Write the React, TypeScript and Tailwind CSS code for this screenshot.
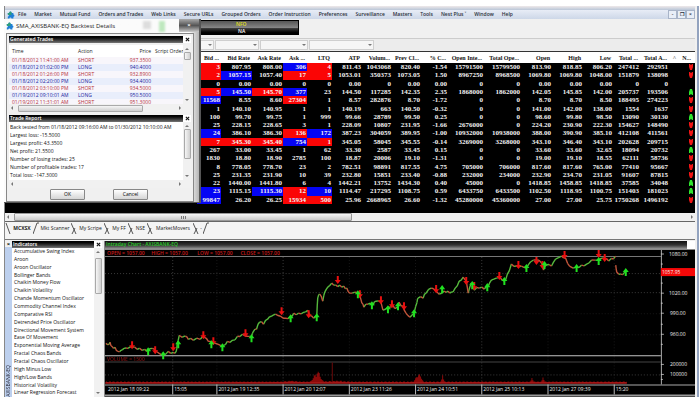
import React from "react";

const menus = [
  "File", "Market", "Mutual Fund", "Orders and Trades", "Web Links", "Secure URLs", "Grouped Orders",
  "Order Instruction", "Preferences", "Surveillance", "Masters", "Tools", "Nest Plus ˅", "Window", "Help",
];

const columns: [string, string][] = [
  ["Bid ...", "w-[24px]"], ["Bid Rate", "w-[31px]"], ["Ask Rate", "w-[31px]"], ["Ask ...", "w-[24px]"],
  ["LTQ", "w-[25px]"], ["ATP", "w-[30px]"], ["Volum...", "w-[30px]"], ["Prev Cl...", "w-[29px]"],
  ["% C...", "w-[27px]"], ["Open Inte...", "w-[36px]"], ["Total Ope...", "w-[37px]"], ["Open", "w-[31px]"],
  ["High", "w-[31px]"], ["Low", "w-[30px]"], ["Total ...", "w-[27px]"], ["Total A...", "w-[29px]"], ["N...", ""],
];

// values | colour of the first five cells (r, b or -) | direction
const quotes: [string, string, "up" | "down" | ""][] = [
  ["3 807.95 808.00 306 4 811.43 1043068 820.40 -1.54 15791500 15799500 813.90 818.85 806.20 247412 292951", "r--br", "down"],
  ["2 1057.15 1057.40 17 5 1053.01 350373 1073.05 1.50 8967250 8968500 1069.80 1069.80 1048.00 151879 138098", "rb-rr", "down"],
  ["0 0.00 0.00 0 0 0.00 0 0.00 0.00 0 0 0.00 0.00 0.00 0 0", "-----", ""],
  ["5 145.50 145.70 377 23 144.50 117285 142.35 2.35 1868000 1862000 142.05 145.85 142.00 205737 193506", "rbrb-", "up"],
  ["11568 8.55 8.60 27304 1 8.57 282876 8.70 -1.72 0 0 8.70 8.70 8.50 188495 274223", "b--r-", "down"],
  ["1 140.10 140.95 1 1 140.19 663 140.50 -0.32 0 0 141.00 142.00 138.00 1554 1637", "-----", "down"],
  ["100 99.70 99.75 1 999 99.66 28789 99.50 0.25 0 0 98.60 99.80 98.50 13090 30130", "-----", "up"],
  ["25 228.15 228.65 3 1 228.09 10807 231.95 -1.66 2676000 0 224.20 230.90 222.30 154627 148490", "-----", "down"],
  ["24 386.10 386.30 136 172 387.23 304059 389.95 -1.00 10932000 10938000 388.00 390.90 385.10 412108 411561", "b--rb", "down"],
  ["7 345.30 345.40 754 1 345.05 58045 345.55 -0.14 3269000 3268000 343.10 346.40 343.10 202628 209715", "rrrbr", "down"],
  ["267 33.00 33.45 1 62 33.30 2587 33.45 0.15 0 0 33.60 33.60 32.65 18094 20732", "-----", "up"],
  ["1830 18.80 18.90 2785 100 18.87 20006 19.10 -1.31 0 0 19.00 19.10 18.55 62111 58736", "-----", "down"],
  ["8 778.05 778.70 23 2 782.51 98891 817.55 4.75 705000 706000 817.60 817.60 765.00 77410 95667", "-----", "down"],
  ["25 231.35 231.90 10 39 232.80 15851 233.40 -0.88 232000 234000 232.90 234.70 231.05 91607 87815", "-----", "down"],
  ["22 1440.00 1441.80 6 4 1442.21 13752 1434.30 0.40 45000 0 1418.85 1458.85 1418.85 37585 34048", "-----", "up"],
  ["23 1115.15 1115.30 12 10 1114.47 217295 1108.75 0.59 6433750 6433500 1102.50 1118.95 1100.75 151403 181023", "b-brb", "up"],
  ["99847 26.20 26.25 15934 500 25.96 2668965 26.60 -1.32 45280000 45360000 27.00 27.00 25.75 1750268 1496192", "b--rr", "down"],
];
const cellColor: Record<string, string> = { r: "bg-[#fb0505]", b: "bg-[#0505f5]", "-": "" };

const trades = [
  ["01/18/2012 11:41:00 AM", "SHORT", "937.3500"],
  ["01/18/2012 01:02:00 PM", "LONG", "940.4000"],
  ["01/18/2012 01:26:00 PM", "SHORT", "932.8900"],
  ["01/18/2012 02:20:00 PM", "LONG", "934.4000"],
  ["01/18/2012 03:10:00 PM", "SHORT", "934.5000"],
  ["01/19/2012 09:10:01 AM", "LONG", "950.5000"],
  ["01/19/2012 11:31:01 AM", "SHORT", "951.3000"],
];

const report = [
  "Back tested from 01/18/2012 09:16:00 AM to 01/30/2012 10:10:00 AM",
  "Largest loss: -15.5000", "Largest profit: 43.3500", "Net profit: 21.5500",
  "Number of losing trades: 25", "Number of profitable trades: 17", "Total loss: -147.3000",
];

const indicators = [
  "Accumulative Swing Index", "Aroon", "Aroon Oscillator", "Bollinger Bands", "Chaikin Money Flow",
  "Chaikin Volatility", "Chande Momentum Oscillator", "Commodity Channel Index", "Comparative RSI",
  "Detrended Price Oscillator", "Directional Movement System", "Ease Of Movement",
  "Exponential Moving Average", "Fractal Chaos Bands", "Fractal Chaos Oscillator", "High Minus Low",
  "High/Low Bands", "Historical Volatility", "Linear Regression Forecast",
];

const price: [number, number][] = [
  [106, 343], [108, 344], [110, 342], [112, 346], [115, 347], [118, 351], [121, 350], [124, 348], [128, 348], [132, 347],
  [137, 349], [142, 350], [147, 351], [152, 348], [155, 350], [159, 353], [163, 354], [168, 351], [173, 352], [176, 351],
  [177, 343], [179, 335], [182, 337], [185, 336], [188, 339], [193, 340], [200, 339], [204, 337], [208, 341], [213, 342],
  [218, 344], [223, 345], [227, 341], [232, 340], [237, 336], [242, 334], [247, 336], [251, 336], [253, 331], [256, 329],
  [259, 322], [263, 324], [267, 319], [271, 316], [275, 314], [280, 316], [285, 318], [290, 316], [293, 313], [298, 313],
  [303, 312], [307, 310], [309, 315], [313, 318], [316, 317], [317, 298], [319, 294], [322, 301], [324, 292], [327, 287],
  [331, 283], [335, 285], [339, 285], [343, 286], [346, 288], [349, 293], [354, 292], [358, 293], [361, 303], [363, 307],
  [367, 304], [372, 305], [375, 301], [380, 302], [382, 310], [387, 307], [392, 305], [395, 308], [398, 302], [402, 306],
  [405, 313], [409, 317], [413, 313], [416, 302], [417, 298], [422, 298], [425, 293], [430, 288], [434, 290], [438, 294],
  [443, 291], [447, 291], [450, 292], [454, 288], [458, 281], [462, 277], [465, 281], [467, 293], [470, 283], [473, 290],
  [478, 288], [483, 289], [487, 286], [490, 280], [495, 278], [498, 276], [503, 281], [506, 274], [510, 264], [515, 266],
  [520, 266], [525, 268], [529, 262], [535, 260], [540, 263], [542, 270], [545, 265], [550, 266], [554, 259], [560, 256],
  [564, 258], [568, 266], [575, 267], [580, 265], [585, 264], [590, 260], [597, 260], [602, 258], [607, 261], [612, 259],
  [614, 257],
];
const lastBars: [number, number][] = [[614, 265], [615, 272], [619, 274], [623, 272]];

const sells = [
  [132, 345], [155, 350], [173, 347], [203, 335], [213, 341], [245, 333], [281, 311], [308, 314], [337, 280], [359, 294],
  [380, 300], [391, 304], [403, 306], [435, 289], [465, 281], [473, 286], [498, 276], [517, 265], [535, 261], [541, 265],
  [563, 255], [597, 254], [603, 258],
];
const buys = [
  [148, 351], [163, 355], [178, 344], [211, 344], [222, 347], [251, 338], [290, 318], [316, 317], [357, 294], [371, 305],
  [387, 309], [397, 306], [413, 313], [441, 289], [471, 285], [486, 287], [503, 281], [525, 268], [543, 265], [575, 268],
  [597, 261], [624, 272],
];

const wobble = (n: number) => Math.sin(n * 12.9898) * 1.6;

function bars(points: [number, number][]) {
  const up: string[] = [];
  const down: string[] = [];
  for (let i = 1; i < points.length; i++) {
    const [x0, y0] = points[i - 1];
    const [x1, y1] = points[i];
    const xm = (x0 + x1) / 2;
    const ym = (y0 + y1) / 2 + wobble(i);
    (ym <= y0 ? up : down).push(`M${x0} ${y0}L${xm} ${ym}`);
    (y1 <= ym ? up : down).push(`M${xm} ${ym}L${x1} ${y1}`);
  }
  return { up: up.join(""), down: down.join("") };
}

function volume() {
  let d = "";
  const peaks = [[316, 11, 4], [417, 9, 3], [441, 7, 1], [530, 5, 1], [541, 6, 1], [290, 1, 6], [335, 1, 8]];
  for (let x = 106; x < 625; x++) {
    let h = 1 + Math.abs(Math.sin(x * 7.13));
    for (const [c, p, w] of peaks) h += p * Math.exp(-(((x - c) / w) ** 2)) * (0.5 + 0.5 * Math.abs(Math.sin(x * 3.7)));
    d += `M${x + 0.5} 383V${(383 - h).toFixed(1)}`;
  }
  return d;
}

const dates: [number, string][] = [
  [106, "2012 Jan 18 09:22"], [172, "15:05"], [216, "2012 Jan 19 12:35"], [282, "2012 Jan 20 12:07"],
  [348, "2012 Jan 23 11:26"], [414, "2012 Jan 24 10:51"], [480, "2012 Jan 25 10:13"], [546, "2012 Jan 27 09:39"], [612, "15:20"],
];
const levels: [number, string][] = [[254, "1080.00"], [293, "1020.00"], [313, "990.00"], [334, "960.00"], [364, "200000"], [374, "100000"]];

function PuzzleIcon({ className }: { className: string }) {
  return (
    <svg viewBox="0 0 10 10" className={className} aria-hidden="true">
      <path d="M3 2.500a1.400 1.400 0 1 1 2.600 0H8v2a1.300 1.300 0 1 1 0 2.600V9.500H5.600a1.300 1.300 0 1 0-2.600 0H1V7a1.300 1.300 0 1 0 0-2.600V2.500z" fill="#1f7fd6" />
      <path d="M3 2.500a1.400 1.400 0 1 1 2.600 0V5H1.600a1.200 1.200 0 0 0-.6-.6V2.500z" fill="#2f9e7a" />
    </svg>
  );
}

function CloseBox({ label }: { label: string }) {
  return (
    <button aria-label={label} className="flex h-[7px] w-[8px] shrink-0 items-center justify-center bg-white">
      <svg viewBox="0 0 6 6" className="size-[5px]"><path d="M1 1l4 4M5 1L1 5" stroke="#111" strokeWidth="1.3" /></svg>
    </button>
  );
}

function Arrow({ dir }: { dir: "up" | "down" | "left" | "right" }) {
  const d = { up: "M1 4l2-2 2 2z", down: "M1 2l2 2 2-2z", left: "M4 1L2 3l2 2z", right: "M2 1l2 2-2 2z" }[dir];
  return <svg viewBox="0 0 6 6" className="size-[6px] shrink-0" aria-hidden="true"><path d={d} fill="#777" /></svg>;
}

function VScroll({ thumb }: { thumb: string }) {
  return (
    <div className="flex w-[8px] shrink-0 flex-col items-center bg-[#f1f1f1] py-px">
      <Arrow dir="up" />
      <div className={`w-[7px] rounded-[1px] border border-[#a9a9a9] bg-linear-to-r from-[#f6f6f6] to-[#cfcfcf] ${thumb}`} />
      <div className="flex-1" />
      <Arrow dir="down" />
    </div>
  );
}

function PanelTitle({ text }: { text: string }) {
  return (
    <div className="flex h-[7px]">
      <div className="flex-1 bg-linear-to-b from-black to-[#777] pl-px text-[5px] leading-[7px] font-semibold text-white">{text}</div>
      <CloseBox label={`Close ${text}`} />
    </div>
  );
}

function Dialog() {
  return (
    <section aria-label="Backtest details" className="absolute top-[19px] left-[4px] flex h-[184px] w-[197px] flex-col border-r-2 border-b border-[#555] bg-linear-to-r from-[#fbfbfb] from-95% to-[#b5b5b5] pr-[5px] pl-[2px]">
      <header className="flex h-[14px] items-center gap-[2px]">
        <PuzzleIcon className="size-[8px]" />
        <h1 className="text-[6px] leading-[8px] text-[#222]">SMA_AXISBANK-EQ Backtest Details</h1>
        <div className="ml-auto flex gap-[8px] pr-[12px] blur-[1px]">
          <span className="h-[8px] w-[8px] bg-[#ddd]" />
          <span className="h-[11px] w-[6px] bg-[#bfe8bf]" />
        </div>
        <button aria-label="Close" className="-mr-[5px] h-[13px] w-[20px] self-start bg-linear-to-b from-[#aaa] via-[#555] to-[#ccc] text-[6px] leading-[9px] font-bold text-white">×</button>
      </header>
      <div className="flex flex-1 flex-col border border-[#888] bg-[#f0f0f0] px-[2px] pt-[2px]">
        <PanelTitle text="Generated Trades" />
        <div className="mt-[2px] flex h-[59px] overflow-hidden bg-white">
          <table className="w-full table-fixed self-start text-[5px] leading-[7px]">
            <thead>
              <tr className="h-[12px] text-left text-[#222]">
                <th className="w-[69px] pl-[3px] font-medium">Time</th>
                <th className="w-[38px] font-medium">Action</th>
                <th className="w-[35px] text-right font-medium">Price</th>
                <th className="pl-[4px] font-medium whitespace-nowrap">Script Order</th>
              </tr>
            </thead>
            <tbody>
              {trades.map(([time, action, p], i) => (
                <tr key={time} className={i % 2 ? "bg-[#e9eefb] text-[#1c1c9c]" : "bg-[#f8f6fb] text-[#b5303c]"}>
                  <td className="pl-[3px] whitespace-nowrap">{time}</td>
                  <td>{action}</td>
                  <td className="text-right">{p}</td>
                  <td />
                </tr>
              ))}
            </tbody>
          </table>
          <VScroll thumb="h-[8px]" />
        </div>
        <div className="flex h-[8px] items-center bg-[#f1f1f1] pr-[8px]">
          <Arrow dir="left" />
          <div className="ml-[3px] h-[7px] w-[125px] rounded-[1px] border border-[#aaa] bg-linear-to-b from-[#f6f6f6] to-[#cfcfcf]" />
          <div className="flex-1" />
          <Arrow dir="right" />
        </div>
        <div className="mt-[3px]"><PanelTitle text="Trade Report" /></div>
        <div className="flex h-[58px] bg-white">
          <div className="min-w-0 flex-1 overflow-hidden pt-px pl-px text-[5px] leading-[8px] whitespace-nowrap text-[#111]">
            {report.map((line) => <p key={line}>{line}</p>)}
          </div>
          <VScroll thumb="h-[30px]" />
        </div>
        <div className="flex h-[8px] items-center justify-between bg-[#f1f1f1] pr-[8px]"><Arrow dir="left" /><Arrow dir="right" /></div>
        <div className="flex gap-[28px] pt-px pl-[41px]">
          {["OK", "Cancel"].map((b) => (
            <button key={b} className="h-[11px] w-[35px] rounded-[1px] border border-[#888] bg-linear-to-b from-white to-[#d5d5d5] text-[5px] leading-[9px] font-medium">{b}</button>
          ))}
        </div>
      </div>
    </section>
  );
}

function MarketTable() {
  return (
    <div className="border-t border-[#333] bg-black pb-[9px] pl-[192px]">
      <table className="h-[152px] w-full table-fixed border-collapse text-right font-['Liberation_Serif',serif] text-[7px] leading-[8px] font-bold text-[#f2f2f2]">
        <thead>
          <tr className="h-[11px] bg-white text-[6px] text-[#111]">
            {columns.map(([name, w]) => (
              <th key={name} className={`${w} p-0 pr-[2px] whitespace-nowrap last:pr-[4px]`}>
                {name === "N..." && <span className="mr-[6px] text-[#666]">^</span>}
                {name}
              </th>
            ))}
          </tr>
        </thead>
        <tbody>
          {quotes.map(([line, colors, dir]) => (
            <tr key={line}>
              {line.split(" ").map((v, i) => (
                <td key={i} className={`p-0 pr-px ${cellColor[colors[i] ?? "-"]}`}>{v}</td>
              ))}
              <td className="p-0 pr-[2px]">
                {dir && (
                  <svg viewBox="0 0 4 6" className="ml-auto h-[6px] w-[4px]" role="img" aria-label={dir}>
                    {dir === "up"
                      ? <path d="M1 0H3L4 3V6H2.600V5H1.400V6H0V3z" fill="#2ee52e" />
                      : <path d="M1 6H3L4 3V0H2.600V1H1.400V0H0V3z" fill="#f01515" />}
                  </svg>
                )}
              </td>
            </tr>
          ))}
        </tbody>
      </table>
    </div>
  );
}

function Slash({ dir }: { dir: "fwd" | "back" | "both" }) {
  const d = { back: "M1 1L5 12", fwd: "M0 12L4 1H6", both: "M0 1L5 12M1 12L4 6" }[dir];
  return <svg viewBox="0 0 6 13" className="h-[13px] w-[6px] shrink-0" aria-hidden="true"><path d={d} stroke="#444" strokeWidth="0.9" fill="none" /></svg>;
}

function Tabs() {
  const tabs: [string, string, "fwd" | "back" | "both"][] = [
    ["MCXSX", "w-[22px] font-bold", "fwd"], ["Mkt Scanner", "w-[32px]", "both"], ["My Scripe", "w-[27px]", "both"],
    ["My FF", "w-[18px]", "both"], ["NSE", "w-[13px]", "both"], ["MarketMovers", "w-[40px]", "both"], ["-", "w-[4px]", "fwd"],
  ];
  return (
    <nav aria-label="Watch lists" className="flex h-[18px] items-start border-t border-[#666] bg-[#f4f4f4] text-[5px] leading-[13px]">
      <Slash dir="back" />
      {tabs.map(([name, w, slash]) => (
        <React.Fragment key={name}>
          <button className={`h-[13px] text-center whitespace-nowrap text-[#222] ${w}`}>{name}</button>
          <Slash dir={slash} />
        </React.Fragment>
      ))}
    </nav>
  );
}

function Chart() {
  const main = bars(price);
  const last = bars(lastBars);
  return (
    <svg viewBox="105 249 588 147" className="block w-full bg-black" role="img" aria-label="AXISBANK-EQ intraday chart">
      <g stroke="#555" strokeWidth="0.7" strokeDasharray="1 2">
        <path d="M105 273.500H659M105 292.500H659M105 374.500H659M172.500 257V384M282.500 257V384M480.500 257V384" />
        <path d="M105 313.500H659M105 334.500H659M216.500 257V384M348.500 257V384M414.500 257V384M546.500 257V384M612.500 257V384" opacity="0.4" />
      </g>
      <g fill="#c81a1a" fontSize="5" fontWeight="600">
        <text x="107" y="255">OPEN = 1057.00</text>
        <text x="151" y="255">HIGH = 1057.00</text>
        <text x="197" y="255">LOW = 1057.00</text>
        <text x="240" y="255">CLOSE = 1057.00</text>
        <text x="107" y="361" opacity="0.6">VOLUME = 1500</text>
      </g>
      <path d="M105 249.500H693" stroke="#888" />
      <path d="M105 256.500H659" stroke="#777" />
      <path d="M105 355.500H659" stroke="#c4c4c4" />
      <path d="M105 361.500H659" stroke="#444" />
      <path d={volume()} stroke="#8b0a0a" strokeWidth="1" />
      <path d="M331.500 383V362" stroke="#6b0a0a" strokeWidth="1" />
      <path d="M105 382.500H625" stroke="#c02020" strokeWidth="1" />
      <path d="M105 384.500H693" stroke="#aaa" />
      <path d="M659.500 250V384" stroke="#aaa" />
      <path d="M659 254h3M659 264h2M659 283h2M659 293h3M659 303h2M659 313h3M659 324h2M659 334h3M659 344h2M659 364h3M659 374h3M659 379h2" stroke="#ccc" strokeWidth="0.8" />
      <g fill="none" strokeWidth="1.4">
        <path d={main.up + last.up} stroke="#55b83c" />
        <path d={main.down + last.down} stroke="#c0543a" />
      </g>
      {sells.map(([x, y]) => (
        <path key={`s${x}`} d={`M${x - 1} ${y - 4}h2v4h2l-3 4l-3 -4h2z`} fill="#e81010" />
      ))}
      {buys.map(([x, y]) => (
        <path key={`b${x}`} d={`M${x - 1} ${y + 4}h2v-4h2l-3 -4l-3 4h2z`} fill="#20e020" />
      ))}
      <rect x="659" y="268" width="34" height="8" fill="#f50808" />
      <g fill="#eee" fontSize="5" fontWeight="500">
        <text x="660" y="274">1057.95</text>
        {levels.map(([y, t]) => <text key={t} x={t.length === 7 ? 667 : 668} y={y + 2}>{t}</text>)}
        {dates.map(([x, t]) => <text key={x} x={x + 2} y="391">{t}</text>)}
      </g>
      <path d="M172.500 384V394M216.500 384V394M282.500 384V394M348.500 384V394M414.500 384V394M480.500 384V394M546.500 384V394M612.500 384V394" stroke="#bbb" />
      <path d="M105 395H693" stroke="#999" strokeWidth="2" />
    </svg>
  );
}

export default function App() {
  return (
    <main className="bg-white pt-[6px] pl-[4px] font-['Open_Sans','Noto_Sans',sans-serif]">
      <div className="mr-px border-r-2 border-l border-[#93a3bf] border-l-[#888] bg-[#f0f0f0] pr-[2px]">
        <div className="h-[4px] bg-linear-to-b from-[#efe9ea] to-[#b9c6d8]" />
        <nav aria-label="Main menu" className="flex h-[9px] items-center bg-linear-to-b from-[#e8edf6] to-[#cdd7e8] pl-[2px] text-[5px] leading-[9px] font-semibold whitespace-nowrap text-[#2a2f3a]">
          <PuzzleIcon className="mr-[3px] size-[8px]" />
          <div className="flex gap-[8px]">
            {menus.map((m) => <button key={m}>{m}</button>)}
          </div>
          <div className="ml-auto flex">
            {["-", "❐", "×"].map((g) => (
              <button key={g} aria-label={g === "-" ? "Minimise" : g === "×" ? "Close window" : "Restore"} className="h-[9px] w-[9px] border border-[#a8b4c8] bg-[#e8eef7] text-center text-[5px] leading-[7px]">{g}</button>
            ))}
          </div>
        </nav>
        <div className="flex h-[19px] pt-px pl-[190px]">
          <div className="h-[15px] w-[104px] border border-black bg-black text-[5px] leading-[7px] font-semibold">
            <div className="h-[7px] bg-linear-to-b from-[#555] to-[#888] pl-[40px] text-[#e5e020]">NFO</div>
            <div className="h-[6px] bg-linear-to-b from-[#444] to-black pl-[42px] text-white">NA</div>
          </div>
        </div>
        <div className="flex h-[13px] gap-px border-t border-[#ccc] bg-[#ececec] pt-px pl-[168px]">
          {["w-[41px]", "w-[44px]", "w-[48px]", "w-[65px]"].map((w, i) => (
            <div key={w} className={`flex h-[10px] items-center justify-end border border-[#cfcfcf] bg-[#f6f6f6] ${w}`}>
              <select aria-label={`Contract filter ${i + 1}`} className="h-[8px] min-w-0 flex-1 appearance-none bg-transparent text-[5px] leading-[8px]" />
              <Arrow dir="down" />
            </div>
          ))}
        </div>
        <MarketTable />
        <div className="flex h-[8px] items-center bg-[#f0f0f0]">
          <Arrow dir="left" />
          <div className="ml-[3px] flex h-[8px] w-[49%] items-center justify-center gap-px rounded-[1px] border border-[#999] bg-linear-to-b from-[#f6f6f6] to-[#c9c9c9]">
            <span className="h-[3px] w-px bg-[#777]" />
            <span className="h-[3px] w-px bg-[#777]" />
            <span className="h-[3px] w-px bg-[#777]" />
          </div>
          <div className="flex-1" />
          <Arrow dir="right" />
        </div>
        <Tabs />
        <div className="flex border-t border-[#777] pt-px">
          <aside className="flex w-[7px] shrink-0 flex-col items-center justify-between bg-[#bdd0ee]">
            <button aria-label="Close dock" className="w-full bg-[#f0f0f0] text-[6px] leading-[6px] font-bold">×</button>
            <span className="rotate-180 text-[5px] leading-[7px] font-medium text-[#223] [writing-mode:vertical-rl]">AXISBANK-EQ</span>
          </aside>
          <section aria-label="Indicators" className="flex w-[90px] shrink-0 flex-col">
            <PanelTitle text="Indicators" />
            <div className="flex flex-1 bg-white">
              <ul className="flex min-w-0 flex-1 flex-col justify-between pl-[2px] text-[5px] leading-[7px] whitespace-nowrap text-[#111]">
                {indicators.map((name) => <li key={name}>{name}</li>)}
              </ul>
              <VScroll thumb="mt-[3px] h-[36px]" />
            </div>
          </section>
          <section aria-label="Chart" className="ml-[2px] min-w-0 flex-1 border-l border-[#888]">
            <div className="flex h-[8px] bg-linear-to-b from-[#111] via-[#333] to-[#999]">
              <h2 className="flex-1 pl-px text-[5px] leading-[7px] font-semibold text-[#28c828]">Intraday Chart - AXISBANK-EQ</h2>
              <span className="w-[8px] bg-white" />
            </div>
            <Chart />
          </section>
        </div>
      </div>
      <Dialog />
    </main>
  );
}
